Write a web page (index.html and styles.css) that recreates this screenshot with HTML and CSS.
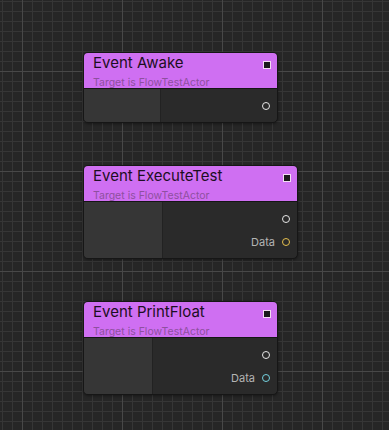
FILE: index.html
```html
<!DOCTYPE html>
<html lang="en">
<head>
    <meta charset="UTF-8">
    <meta name="viewport" content="width=device-width, initial-scale=1.0">
    <title>Flow Graph</title>
    <link rel="stylesheet" href="styles.css">
</head>
<body>
    <div class="canvas">

        <div class="node node-awake">
            <div class="node-header">
                <div class="node-title">Event Awake</div>
                <div class="node-subtitle">Target is FlowTestActor</div>
                <span class="exec-pin"></span>
            </div>
            <div class="node-body">
                <div class="inputs"></div>
                <div class="outputs">
                    <div class="pin-row"><span class="pin"></span></div>
                </div>
            </div>
        </div>

        <div class="node node-execute">
            <div class="node-header">
                <div class="node-title">Event ExecuteTest</div>
                <div class="node-subtitle">Target is FlowTestActor</div>
                <span class="exec-pin"></span>
            </div>
            <div class="node-body">
                <div class="inputs"></div>
                <div class="outputs">
                    <div class="pin-row"><span class="pin"></span></div>
                    <div class="pin-row"><span class="pin-label">Data</span><span class="pin pin-yellow"></span></div>
                </div>
            </div>
        </div>

        <div class="node node-print">
            <div class="node-header">
                <div class="node-title">Event PrintFloat</div>
                <div class="node-subtitle">Target is FlowTestActor</div>
                <span class="exec-pin"></span>
            </div>
            <div class="node-body">
                <div class="inputs"></div>
                <div class="outputs">
                    <div class="pin-row"><span class="pin"></span></div>
                    <div class="pin-row"><span class="pin-label">Data</span><span class="pin pin-cyan"></span></div>
                </div>
            </div>
        </div>

    </div>
</body>
</html>
```

FILE: styles.css
```css
body {
    margin: 0;
    font-family: Inter, "Noto Sans", sans-serif;
    background: #262626;
}

/* grille du graphe: lignes fines tous les 10px, fortes tous les 100px */
.canvas {
    position: relative;
    width: 389px;
    height: 430px;
    overflow: hidden;
    background-color: #262626;
    background-image:
        linear-gradient(to right, #484848 1px, transparent 1px),
        linear-gradient(to bottom, #484848 1px, transparent 1px),
        linear-gradient(to right, #363636 1px, transparent 1px),
        linear-gradient(to bottom, #363636 1px, transparent 1px);
    background-size: 100px 100px, 100px 100px, 10px 10px, 10px 10px;
    background-position: 22px 0, 0 71px, 2px 0, 0 1px;
}

.node {
    position: absolute;
    border: 1px solid #161616;
    border-radius: 5px;
    overflow: hidden;
    background: #2a2a2a;
    box-shadow: 0 1px 3px rgba(0, 0, 0, 0.4);
}

.node-awake {
    left: 83px;
    top: 52px;
    width: 193px;
}

.node-execute {
    left: 83px;
    top: 165px;
    width: 213px;
}

.node-print {
    left: 83px;
    top: 301px;
    width: 193px;
}

.node-header {
    position: relative;
    height: 36px;
    background: #cf6ff2;
    border-bottom: 1px solid #151515;
    padding: 1px 0 0 9px;
    box-sizing: border-box;
}

.node-title {
    font-size: 15px;
    line-height: 18px;
    color: #1c0e22;
}

.node-subtitle {
    margin-top: 4px;
    font-size: 10.5px;
    line-height: 14px;
    color: #8e509f;
}

.exec-pin {
    position: absolute;
    right: 6px;
    top: 8px;
    width: 6px;
    height: 6px;
    background: #1a1a1a;
    border: 1px solid #f3dcf3;
}

.node-body {
    display: flex;
}

.inputs {
    background: #363636;
    border-right: 1px solid #222;
}

.node-awake .inputs {
    width: 76px;
}

.node-execute .inputs {
    width: 78px;
}

.node-print .inputs {
    width: 68px;
}

.outputs {
    flex: 1;
    padding: 5px 0;
}

.pin-row {
    height: 23px;
    display: flex;
    align-items: center;
    justify-content: flex-end;
    padding-right: 7px;
    gap: 7px;
}

.pin-label {
    font-size: 11px;
    color: #b4b4b4;
}

.pin {
    width: 6px;
    height: 6px;
    border: 1.5px solid #e6e6e6;
    border-radius: 50%;
}

.pin-yellow {
    border-color: #e5bf4e;
}

.pin-cyan {
    border-color: #74d2df;
}
```
